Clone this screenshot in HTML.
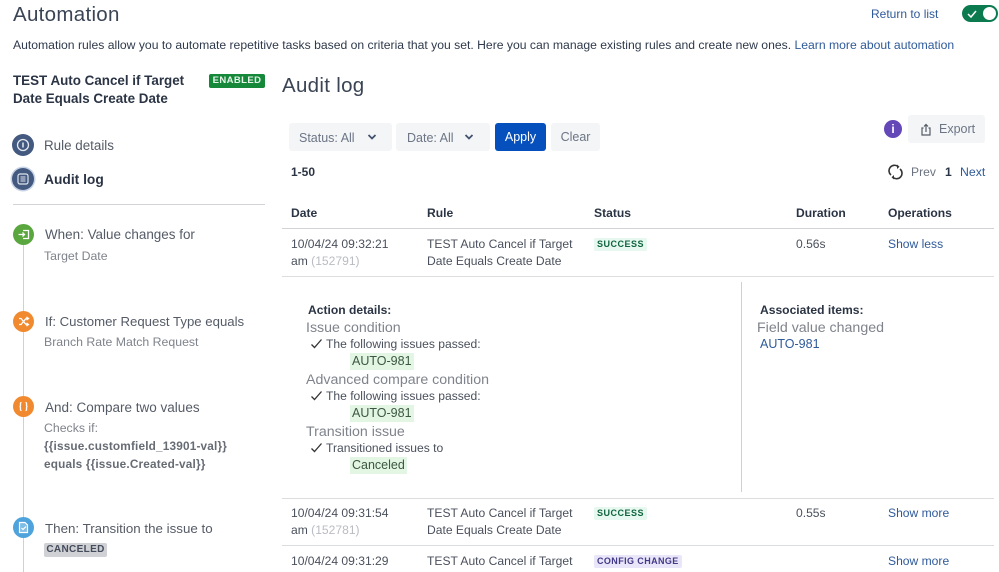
<!DOCTYPE html>
<html><head><meta charset="utf-8"><style>
html,body{margin:0;padding:0;background:#fff}
body{width:999px;height:572px;overflow:hidden;position:relative;font-family:"Liberation Sans",sans-serif;color:#42526e}
.t{position:absolute;white-space:nowrap;line-height:16px;font-size:12.100px;color:#4a505c}
.b{position:absolute}
.a{color:#2f5a9a}
.h{font-weight:700;color:#2b3444}
.g{color:#7f838b}
.s{font-size:13.600px;color:#555b66}
.c{position:absolute;width:21px;height:21px;border-radius:50%}
.c svg{position:absolute;left:0;top:0}
.hl{position:absolute;background:#e2f6e3;height:17px;line-height:17px;font-size:12.500px;color:#3c5743;padding:0 2px;white-space:nowrap}
.btn{position:absolute;background:#f4f5f7;border-radius:3px;height:28px;line-height:28px;font-size:12.500px;color:#6b7585;white-space:nowrap}
.ln{position:absolute;background:#dcdddf;height:1px}
.lz{position:absolute;font-size:9px;font-weight:700;letter-spacing:.5px;border-radius:2px;white-space:nowrap;height:13px;line-height:13px;padding:0 3px}
</style></head><body>

<div class="t" style="left:13px;top:3px;font-size:20.500px;line-height:24px;color:#3a4454;letter-spacing:.3px">Automation</div>
<div class="t a" style="left:871px;top:6px;font-size:12px">Return to list</div>
<div class="b" style="left:962px;top:5px;width:36px;height:17px;border-radius:9px;background:#0b7a4f"></div>
<svg class="b" style="left:962px;top:5px" width="36" height="17"><path d="M6 9l3 3 5-6" fill="none" stroke="#fff" stroke-width="1.500"/><circle cx="27.500" cy="8.500" r="6.500" fill="#fff"/></svg>
<div class="t" style="left:13px;top:37px;font-size:12.180px;color:#2f3a4c">Automation rules allow you to automate repetitive tasks based on criteria that you set. Here you can manage existing rules and create new ones. <span class="a">Learn more about automation</span></div>

<div class="t" style="left:13px;top:72px;font-size:13.400px;line-height:17.500px;font-weight:700;color:#2b3444">TEST Auto Cancel if Target<br>Date Equals Create Date</div>
<div class="b" style="left:209px;top:74px;width:56px;height:14px;background:#15883a;border-radius:2px;color:#e6f5e9;font-size:9.500px;font-weight:700;line-height:14px;text-align:center;letter-spacing:.4px">ENABLED</div>

<div class="c" style="left:12px;top:134px;background:#43597f;width:22px;height:22px"><svg width="22" height="22"><circle cx="11" cy="11" r="5.500" fill="none" stroke="#e4e8ef" stroke-width="1.300"/><path d="M11 8.500v5" stroke="#e4e8ef" stroke-width="1.500"/></svg></div>
<div class="t s" style="left:44px;top:138px;font-size:13.400px">Rule details</div>
<div class="c" style="left:12px;top:168px;background:#43597f;width:22px;height:22px;box-shadow:0 0 0 1.500px #c8d4e6"><svg width="22" height="22"><rect x="6" y="6" width="10" height="10" rx="2" fill="none" stroke="#dfe4ec" stroke-width="1.200"/><path d="M8.500 9h5M8.500 11h5M8.500 13h5" stroke="#dfe4ec"/></svg></div>
<div class="t" style="left:44px;top:172px;font-size:13.800px;font-weight:700;color:#2b3444">Audit log</div>
<div class="b" style="left:13px;top:204px;width:252px;height:1px;background:#d2d3d6"></div>

<div class="b" style="left:23px;top:240px;width:1px;height:332px;background:#cfd1d4"></div>

<div class="c" style="left:13px;top:224px;background:#5aa63f"><svg width="21" height="21"><path d="M10 6.500h5.500v8H10" fill="none" stroke="#fff" stroke-width="1.300"/><path d="M5.500 10.500h6M9.500 8.500l2 2-2 2" fill="none" stroke="#fff" stroke-width="1.300"/></svg></div>
<div class="t s" style="left:45px;top:227px;font-size:13.450px">When: Value changes for</div>
<div class="t g" style="left:44px;top:248px;font-size:12.300px">Target Date</div>

<div class="c" style="left:13px;top:311px;background:#f18a2e"><svg width="21" height="21"><path d="M6 7.500h2l5 6h2M6 13.500h2l5-6h2M13.500 6l2 1.500-2 1.500M13.500 12l2 1.500-2 1.500" fill="none" stroke="#fff" stroke-width="1.300"/></svg></div>
<div class="t s" style="left:45px;top:314px;font-size:13.200px">If: Customer Request Type equals</div>
<div class="t g" style="left:44px;top:334px;font-size:12.300px">Branch Rate Match Request</div>

<div class="c" style="left:13px;top:396px;background:#f18a2e"><svg width="21" height="21"><path d="M8.500 6.500c-1.500 0-1 1.500-1 2.500 0 1-.5 1.500-1 1.500.5 0 1 .5 1 1.500s-.5 2.500 1 2.500M12.500 6.500c1.500 0 1 1.500 1 2.500 0 1 .5 1.500 1 1.500-.5 0-1 .5-1 1.500s.5 2.500-1 2.500" fill="none" stroke="#fff" stroke-width="1.300"/></svg></div>
<div class="t s" style="left:45px;top:400px;font-size:13.500px">And: Compare two values</div>
<div class="t g" style="left:44px;top:420px;font-size:12.300px">Checks if:</div>
<div class="t" style="left:44px;top:438px;font-size:11.800px;font-weight:700;color:#666b74;line-height:17.500px;letter-spacing:.17px">{{issue.customfield_13901-val}}<br>equals {{issue.Created-val}}</div>

<div class="c" style="left:13px;top:517px;background:#4fa3dc"><svg width="21" height="21"><path d="M6.500 5.500h5.500l2.500 2.500v7.500h-8z" fill="#dcedf8" fill-opacity=".35" stroke="#fff" stroke-width="1.200"/><path d="M8.500 11l1.500 1.500 3-3" fill="none" stroke="#fff" stroke-width="1.200"/></svg></div>
<div class="t s" style="left:45px;top:521px;font-size:13.350px">Then: Transition the issue to</div>
<div class="b" style="left:44px;top:543px;width:63px;height:14px;background:#cfd1d4;border-radius:2px;font-size:10px;font-weight:700;line-height:14px;text-align:center;color:#444c5c;letter-spacing:.35px">CANCELED</div>

<div class="t" style="left:282px;top:73px;font-size:20.500px;line-height:26px;color:#3a4454;letter-spacing:.3px">Audit log</div>

<div class="btn" style="left:289px;top:123px;width:103px"><span style="position:absolute;left:10px;top:1px">Status: All</span><svg style="position:absolute;left:78px;top:10px" width="10" height="8"><path d="M1.500 2l3.500 3.500L8.500 2" fill="none" stroke="#42526e" stroke-width="1.800"/></svg></div>
<div class="btn" style="left:396px;top:123px;width:94px"><span style="position:absolute;left:11px;top:1px">Date: All</span><svg style="position:absolute;left:68px;top:10px" width="10" height="8"><path d="M1.500 2l3.500 3.500L8.500 2" fill="none" stroke="#42526e" stroke-width="1.800"/></svg></div>
<div class="btn" style="left:495px;top:123px;width:51px;background:#0650bd;color:#fff;text-align:center;line-height:29px">Apply</div>
<div class="btn" style="left:551px;top:123px;width:49px;text-align:center;color:#6b7585;line-height:29px">Clear</div>

<div class="b" style="left:884px;top:120px;width:18px;height:18px;border-radius:50%;background:#6548b8;color:#fff;font-size:12px;font-weight:700;line-height:18px;text-align:center">i</div>
<div class="btn" style="left:908px;top:115px;width:77px"><svg style="position:absolute;left:12px;top:8px" width="12" height="13"><path d="M3.500 5H2v7h8V5H8.500M6 9V1.500M4 3.500l2-2 2 2" fill="none" stroke="#555b66" stroke-width="1.200"/></svg><span style="position:absolute;left:31px">Export</span></div>

<div class="t h" style="left:291px;top:164px;font-size:12px">1-50</div>
<svg class="b" style="left:888px;top:164px" width="15" height="16"><path d="M3 11A5.500 5.500 0 0 1 10 2.500M12 5A5.500 5.500 0 0 1 5 13.500" fill="none" stroke="#333" stroke-width="1.600"/><path d="M9 0.500l2.500 2.200L9 5zM6 11l-2.500 2.300L6 15.500z" fill="#333"/></svg>
<div class="t" style="left:911px;top:164px;color:#6b7280">Prev</div>
<div class="t h" style="left:945px;top:164px">1</div>
<div class="t a" style="left:960px;top:164px;font-size:12.300px">Next</div>

<div class="t h" style="left:291px;top:205px">Date</div>
<div class="t h" style="left:427px;top:205px">Rule</div>
<div class="t h" style="left:594px;top:205px">Status</div>
<div class="t h" style="left:796px;top:205px">Duration</div>
<div class="t h" style="left:888px;top:205px">Operations</div>
<div class="ln" style="left:282px;top:228px;width:712px;background:#d2d3d6"></div>

<div class="t" style="left:291px;top:236px;line-height:17px">10/04/24 09:32:21<br>am <span style="color:#b9bcc2">(152791)</span></div>
<div class="t" style="left:427px;top:236px;line-height:17px">TEST Auto Cancel if Target<br>Date Equals Create Date</div>
<div class="lz" style="left:594px;top:238px;background:#e6f8ef;color:#10653f">SUCCESS</div>
<div class="t" style="left:796px;top:236px">0.56s</div>
<div class="t a" style="left:888px;top:236px">Show less</div>
<div class="ln" style="left:282px;top:276px;width:712px"></div>

<div class="t h" style="left:308px;top:302px">Action details:</div>
<div class="t g" style="left:306px;top:320px;font-size:14.200px">Issue condition</div>
<svg class="b" style="left:310px;top:338px" width="13" height="12"><path d="M1.500 6.500l3 3 7-8" fill="none" stroke="#333" stroke-width="1.300"/></svg>
<div class="t" style="left:326px;top:336px">The following issues passed:</div>
<div class="hl" style="left:350px;top:353px">AUTO-981</div>
<div class="t g" style="left:306px;top:372px;font-size:14.200px">Advanced compare condition</div>
<svg class="b" style="left:310px;top:390px" width="13" height="12"><path d="M1.500 6.500l3 3 7-8" fill="none" stroke="#333" stroke-width="1.300"/></svg>
<div class="t" style="left:326px;top:388px">The following issues passed:</div>
<div class="hl" style="left:350px;top:405px">AUTO-981</div>
<div class="t g" style="left:306px;top:424px;font-size:14.200px">Transition issue</div>
<svg class="b" style="left:310px;top:442px" width="13" height="12"><path d="M1.500 6.500l3 3 7-8" fill="none" stroke="#333" stroke-width="1.300"/></svg>
<div class="t" style="left:326px;top:440px">Transitioned issues to</div>
<div class="hl" style="left:350px;top:457px">Canceled</div>

<div class="b" style="left:741px;top:282px;width:1px;height:210px;background:#cfd0d3"></div>
<div class="t h" style="left:760px;top:302px">Associated items:</div>
<div class="t g" style="left:757px;top:320px;font-size:14.200px">Field value changed</div>
<div class="t a" style="left:760px;top:336px;font-size:12.500px">AUTO-981</div>
<div class="ln" style="left:282px;top:498px;width:712px"></div>

<div class="t" style="left:291px;top:505px;line-height:17px">10/04/24 09:31:54<br>am <span style="color:#b9bcc2">(152781)</span></div>
<div class="t" style="left:427px;top:505px;line-height:17px">TEST Auto Cancel if Target<br>Date Equals Create Date</div>
<div class="lz" style="left:594px;top:507px;background:#e6f8ef;color:#10653f">SUCCESS</div>
<div class="t" style="left:796px;top:505px">0.55s</div>
<div class="t a" style="left:888px;top:505px">Show more</div>
<div class="ln" style="left:282px;top:545px;width:712px"></div>

<div class="t" style="left:291px;top:553px">10/04/24 09:31:29</div>
<div class="t" style="left:427px;top:553px">TEST Auto Cancel if Target</div>
<div class="lz" style="left:594px;top:555px;background:#e9e6fa;color:#423a86;letter-spacing:.4px">CONFIG CHANGE</div>
<div class="t a" style="left:888px;top:553px">Show more</div>
</body></html>
